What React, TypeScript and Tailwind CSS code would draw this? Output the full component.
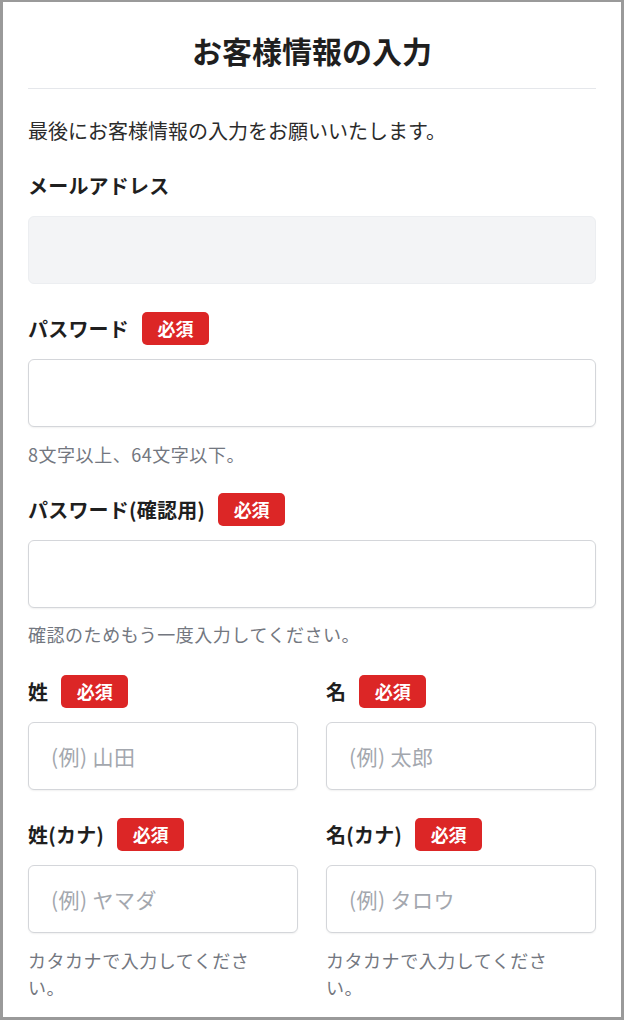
import React from 'react';

function Badge() {
	return (
		<span className="inline-flex h-[33px] w-[67px] items-center justify-center rounded-[5px] bg-[#dc2626] text-[18px] font-bold text-white">
			必須
		</span>
	);
}

function Label({ text, required = true }: { text: string; required?: boolean }) {
	return (
		<div className="flex h-[33px] items-center gap-[13px]">
			<span className="text-[20px] font-bold tracking-[0.01em] text-[#1f1f1f]">{text}</span>
			{required && <Badge />}
		</div>
	);
}

function Field({
	placeholder,
	disabled = false,
}: {
	placeholder?: string;
	disabled?: boolean;
}) {
	return (
		<input
			type="text"
			placeholder={placeholder}
			disabled={disabled}
			className={
				disabled
					? 'mt-[14px] block h-[68px] w-full rounded-[6px] border border-[#eceef1] bg-[#f3f4f6] px-[22px] text-[21px]'
					: 'mt-[14px] block h-[68px] w-full rounded-[6px] border border-[#d4d6da] bg-white px-[22px] text-[21px] tracking-[0.02em] text-[#1f1f1f] shadow-[0_1px_2px_rgba(0,0,0,0.06)] placeholder:text-[#a3a7ae]'
			}
		/>
	);
}

function Help({ children, className = '' }: { children: React.ReactNode; className?: string }) {
	return (
		<p className={'text-[18px] leading-[27px] tracking-[0.03em] text-[#737780] ' + className}>
			{children}
		</p>
	);
}

export default function App() {
	return (
		<div
			className="h-[1020px] w-[624px] overflow-hidden border-[3px] border-t-2 border-[#9a9a9a] bg-white px-[25px]"
			style={{ fontFamily: '"Noto Sans CJK JP", "Noto Sans", sans-serif' }}
		>
			<header className="pt-[28px]">
				<h1 className="text-center text-[30px] font-bold leading-[40px] text-[#1f1f1f]">
					お客様情報の入力
				</h1>
				<div className="mt-[18px] h-px bg-[#e5e7eb]" />
			</header>

			<p className="mt-[28px] text-[20px] leading-[28px] text-[#2b2b2b]">
				最後にお客様情報の入力をお願いいたします。
			</p>

			<section className="mt-[24px]">
				<Label text="メールアドレス" required={false} />
				<Field disabled />
			</section>

			<section className="mt-[28px]">
				<Label text="パスワード" />
				<Field />
				<Help className="mt-[14px]">8文字以上、64文字以下。</Help>
			</section>

			<section className="mt-[25px]">
				<Label text="パスワード(確認用)" />
				<Field />
				<Help className="mt-[13px]">確認のためもう一度入力してください。</Help>
			</section>

			<div className="mt-[27px] grid grid-cols-2 gap-x-[28px]">
				<section>
					<Label text="姓" />
					<Field placeholder="(例) 山田" />
				</section>
				<section>
					<Label text="名" />
					<Field placeholder="(例) 太郎" />
				</section>
				<section className="mt-[28px]">
					<Label text="姓(カナ)" />
					<Field placeholder="(例) ヤマダ" />
					<Help className="mt-[14px] max-w-[250px]">カタカナで入力してください。</Help>
				</section>
				<section className="mt-[28px]">
					<Label text="名(カナ)" />
					<Field placeholder="(例) タロウ" />
					<Help className="mt-[14px] max-w-[250px]">カタカナで入力してください。</Help>
				</section>
			</div>
		</div>
	);
}
